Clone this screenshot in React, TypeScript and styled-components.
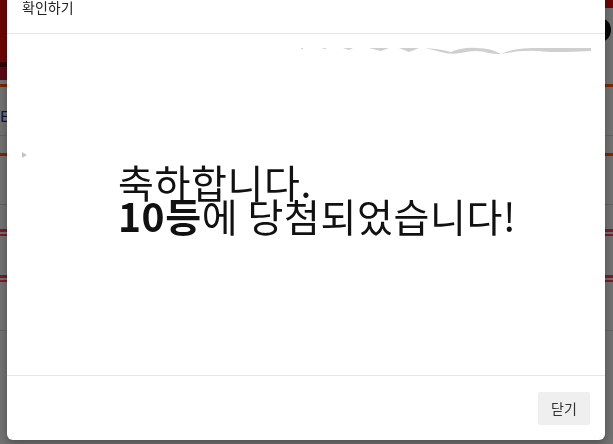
import React from 'react'
import styled, { createGlobalStyle } from 'styled-components'

const GlobalStyle = createGlobalStyle`
  html, body {
    margin: 0;
    padding: 0;
    width: 613px;
    height: 444px;
    overflow: hidden;
    background: #e2e2e2;
    font-family: 'Noto Sans CJK KR', 'Noto Sans', sans-serif;
  }
  * { box-sizing: border-box; }
`

/* page behind the dialog */
const Page = styled.div`
  width: 613px;
  height: 444px;
  display: flex;
  flex-direction: column;
  background: #e2e2e2;
`

const Banner = styled.div`
  height: 80px;
  display: flex;
`

const BannerLeft = styled.div`
  width: 300px;
  display: flex;
  flex-direction: column;
`

const BannerRed = styled.div`
  flex: 1;
  background: #d80a0a;
  border-bottom: 5px solid #5a0000;
`

const BannerRedLow = styled.div`
  height: 13px;
  background: #b41424;
`

const BannerRight = styled.div`
  flex: 1;
  display: flex;
  justify-content: flex-end;
  align-items: flex-start;
  border-top: 8px solid #d80a0a;
  padding: 10px 2px 0 0;
`

const Avatar = styled.div`
  width: 22px;
  height: 24px;
  border-radius: 50%;
  background: #111;
`

const Rule = styled.div<{ $color: string; $h?: number; $gap: number }>`
  height: ${(p) => p.$h ?? 3}px;
  margin-top: ${(p) => p.$gap}px;
  background: ${(p) => p.$color};
  flex-shrink: 0;
`

const DoubleRule = styled.div<{ $gap: number }>`
  height: 7px;
  margin-top: ${(p) => p.$gap}px;
  border-top: 3px solid #f23854;
  border-bottom: 2px solid #f23854;
  flex-shrink: 0;
`

const MenuText = styled.div`
  margin-top: 20px;
  height: 18px;
  font-size: 15px;
  line-height: 18px;
  color: #1a2a8a;
`

/* dialog */
const Backdrop = styled.div`
  position: fixed;
  inset: 0;
  background: rgba(0, 0, 0, 0.5);
  display: flex;
  flex-direction: column;
  padding: 0 8px 4px 7px;
`

const Dialog = styled.div`
  margin-top: -24px;
  flex: 1;
  display: flex;
  flex-direction: column;
  background: #fff;
  border-radius: 6px;
  overflow: hidden;
  box-shadow: 0 3px 9px rgba(0, 0, 0, 0.3);
`

const Header = styled.div`
  height: 58px;
  padding: 0 15px 16px;
  display: flex;
  align-items: flex-end;
  border-bottom: 1px solid #e5e5e5;
`

const Title = styled.h4`
  margin: 0;
  font-size: 14px;
  font-weight: 400;
  line-height: 20px;
  color: #222;
`

const Body = styled.div`
  flex: 1;
  display: flex;
  flex-direction: column;
  padding: 11px 14px 0 14px;
`

const Torn = styled.svg`
  display: block;
  align-self: flex-end;
`

const Broken = styled.svg`
  display: block;
  margin: 97px 0 0 1px;
`

const Message = styled.p`
  margin: 6px 0 0 97px;
  font-size: 39px;
  line-height: 34px;
  letter-spacing: 0.6px;
  color: #111;
`

const Strong = styled.b`
  font-weight: 700;
`

const Footer = styled.div`
  height: 65px;
  border-top: 1px solid #e5e5e5;
  display: flex;
  justify-content: flex-end;
  align-items: center;
  padding: 0 15px 0 0;
`

const CloseButton = styled.button`
  width: 52px;
  height: 33px;
  border: none;
  border-radius: 2px;
  background: #efefef;
  color: #333;
  font-family: inherit;
  font-size: 14px;
  cursor: pointer;
`

const App: React.FC = () => {
  return (
    <>
      <GlobalStyle />
      <Page>
        <Banner>
          <BannerLeft>
            <BannerRed />
            <BannerRedLow />
          </BannerLeft>
          <BannerRight>
            <Avatar />
          </BannerRight>
        </Banner>
        <Rule $color='#ff4800' $gap={4} />
        <MenuText>E</MenuText>
        <Rule $color='#c4c4c4' $h={1} $gap={10} />
        <Rule $color='#ff4800' $gap={17} />
        <Rule $color='#c0c0c0' $h={1} $gap={48} />
        <DoubleRule $gap={24} />
        <DoubleRule $gap={39} />
        <Rule $color='#c8c8c8' $h={1} $gap={48} />
      </Page>

      <Backdrop>
        <Dialog>
          <Header>
            <Title>확인하기</Title>
          </Header>
          <Body>
            <Torn width='290' height='10' viewBox='0 0 290 10'>
              <path
                d='M0 3 L2 3 L2 4 L0 4 Z M20 3 L26 3 L24 4 Z M42 3 L52 3 L48 5 Z M68 3 L88 3 L80 6 Z M98 3 L118 3 L108 7 Z
                   M124 3 Q140 4 150 7 Q162 2 176 3 Q190 3 200 9 Q212 3 232 3 L290 3 L290 6 Q250 8 238 6 Q220 5 206 8 Q196 10 188 8 Q176 4 160 8 Q148 10 140 7 Q132 5 124 3 Z'
                fill='#cfcfcf'
              />
            </Torn>
            <Broken width='5' height='6' viewBox='0 0 5 6'>
              <path d='M0 0 L5 3 L0 6 Z' fill='#c4c4c4' />
            </Broken>
            <Message>
              축하합니다.
              <br />
              <Strong>10등</Strong>에 당첨되었습니다!
            </Message>
          </Body>
          <Footer>
            <CloseButton>닫기</CloseButton>
          </Footer>
        </Dialog>
      </Backdrop>
    </>
  )
}

export default App
